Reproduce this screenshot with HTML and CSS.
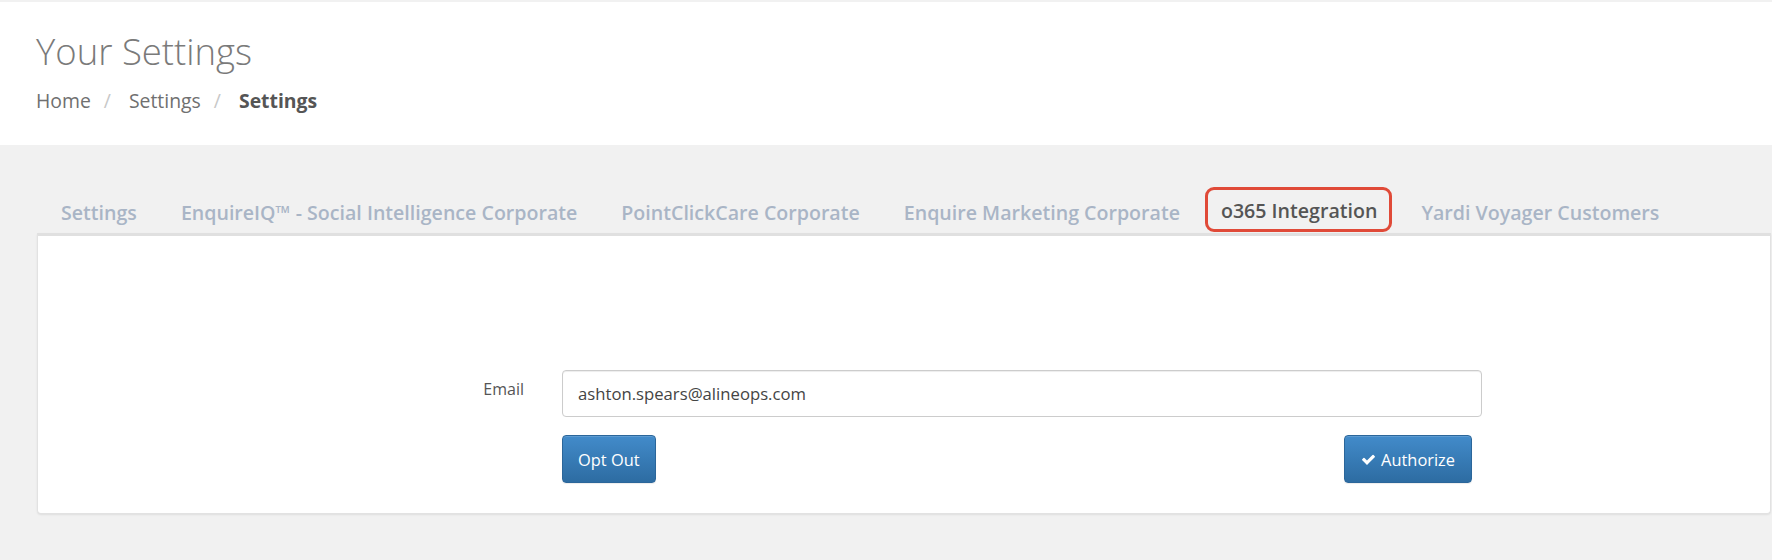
FILE: index.html
```html
<!DOCTYPE html>
<html lang="en">
<head>
<meta charset="utf-8">
<title>Your Settings</title>
<link rel="stylesheet" href="styles.css">
</head>
<body>
<header class="page-header">
  <h1 class="title">Your Settings</h1>
  <ol class="breadcrumb">
    <li class="crumb">Home</li>
    <li class="sep">/</li>
    <li class="crumb">Settings</li>
    <li class="sep">/</li>
    <li class="crumb current">Settings</li>
  </ol>
</header>
<main class="content">
  <ul class="tabs">
    <li class="tab">Settings</li>
    <li class="tab">EnquireIQ™ - Social Intelligence Corporate</li>
    <li class="tab">PointClickCare Corporate</li>
    <li class="tab">Enquire Marketing Corporate</li>
    <li class="tab active">o365 Integration</li>
    <li class="tab">Yardi Voyager Customers</li>
  </ul>
  <section class="panel">
    <form class="form">
      <label class="label" for="email">Email</label>
      <input class="input" id="email" type="text" value="ashton.spears@alineops.com">
      <div class="actions">
        <button type="button" class="btn">Opt Out</button>
        <button type="button" class="btn btn-auth">
          <svg class="check" viewBox="0 0 1792 1792" aria-hidden="true"><path fill="#fff" d="M1671 566q0 40-28 68l-724 724-136 136q-28 28-68 28t-68-28l-136-136-362-362q-28-28-28-68t28-68l136-136q28-28 68-28t68 28l294 295 656-657q28-28 68-28t68 28l136 136q28 28 28 68z"/></svg>
          Authorize
        </button>
      </div>
    </form>
  </section>
</main>
</body>
</html>
```
FILE: styles.css
```css
* { box-sizing: border-box; }
html, body { margin: 0; padding: 0; }
body {
  background: #f1f1f1;
  font-family: "Open Sans", "Noto Sans", sans-serif;
  color: #555;
  padding-top: 2px;
}
.page-header {
  background: #fff;
  padding: 29px 36px 31px;
  height: 143px;
}
.title {
  margin: 0;
  font-size: 36.5px;
  font-weight: 300;
  line-height: 40px;
  color: #7a7a7a;
}
.breadcrumb {
  list-style: none;
  margin: 17px 0 0;
  padding: 0;
  display: flex;
  font-size: 19.4px;
  line-height: 26px;
  color: #707070;
}
.sep { color: #c8c8c8; padding: 0 18px 0 13px; }
.current { font-weight: 700; color: #555; }

.content { padding: 42px 1px 46px 37px; }
.tabs {
  list-style: none;
  margin: 0 0 1px;
  padding: 0 0 0 3px;
  display: flex;
  align-items: flex-end;
  gap: 2px;
}
.tab {
  font-size: 19.6px;
  font-weight: 600;
  line-height: 26px;
  color: #a9b5c6;
  padding: 13px 21px 6px;
}
.tab.active {
  color: #555;
  border: 3px solid #e04a38;
  border-radius: 9px;
  padding: 8px 12px 5px 13px;
  margin-left: 2px;
  margin-right: 6px;
}
.panel {
  background: #fff;
  border: 1px solid #e2e2e2;
  border-top: 3px solid #e0e0e0;
  border-radius: 0 0 4px 4px;
  box-shadow: 0 1px 2px rgba(0,0,0,0.08);
  padding: 134px 0 30px;
}
.form {
  display: grid;
  grid-template-columns: 486px 920px;
  column-gap: 38px;
  row-gap: 18px;
}
.label {
  text-align: right;
  font-size: 16px;
  line-height: 20px;
  padding-top: 9px;
  color: #555;
}
.input {
  height: 47px;
  border: 1px solid #ccc;
  border-radius: 4px;
  box-shadow: inset 0 1px 1px rgba(0,0,0,0.075);
  padding: 0 15px;
  font-family: "Open Sans", "Noto Sans", sans-serif;
  font-size: 16.7px;
  color: #444;
}
.actions {
  grid-column: 2;
  display: flex;
  justify-content: space-between;
  padding-right: 10px;
}
.btn {
  height: 48px;
  padding: 0 15px;
  border: 1px solid #2b669a;
  border-radius: 4px;
  background: linear-gradient(to bottom, #428bca 0%, #2d6ca2 100%);
  box-shadow: inset 0 1px 0 rgba(255,255,255,0.15), 0 1px 1px rgba(0,0,0,0.075);
  color: #fff;
  font-family: "Open Sans", "Noto Sans", sans-serif;
  font-size: 16.4px;
  display: inline-flex;
  align-items: center;
  gap: 5px;
}
.btn-auth { padding: 0 16px; }
.check { width: 15px; height: 15px; }
```
